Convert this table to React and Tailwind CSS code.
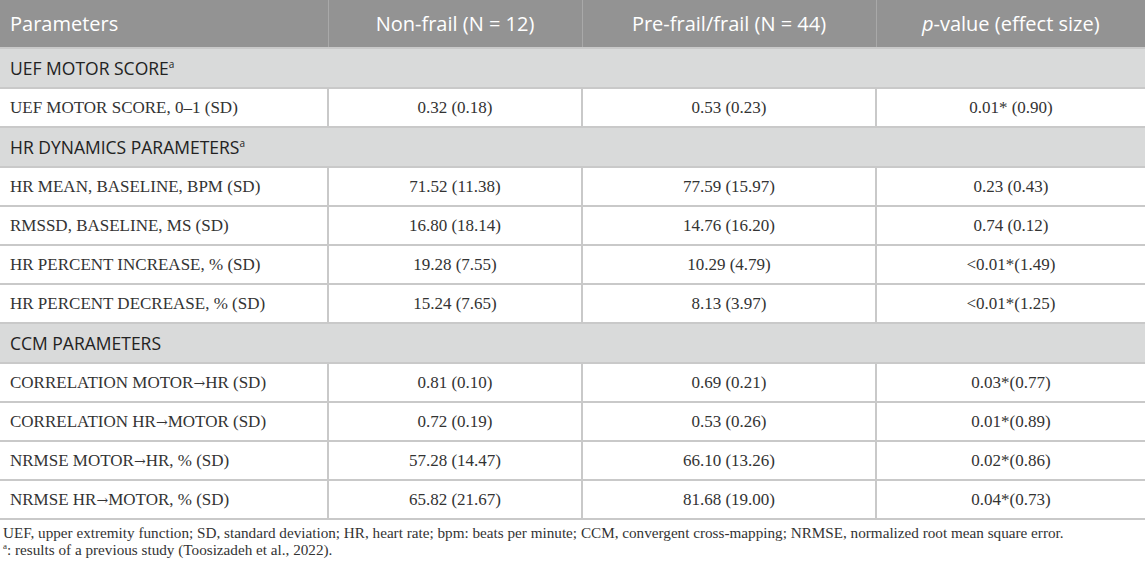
import React from "react";

const sans = { fontFamily: '"Open Sans", "Noto Sans", sans-serif' };
const serif = { fontFamily: '"Liberation Serif", "Times New Roman", serif' };
const arrowFont = { fontFamily: '"DejaVu Serif", serif' };

const sections = [
  {
    title: "UEF MOTOR SCORE",
    sup: true,
    rows: [["UEF MOTOR SCORE, 0–1 (SD)", "0.32 (0.18)", "0.53 (0.23)", "0.01* (0.90)"]],
  },
  {
    title: "HR DYNAMICS PARAMETERS",
    sup: true,
    rows: [
      ["HR MEAN, BASELINE, BPM (SD)", "71.52 (11.38)", "77.59 (15.97)", "0.23 (0.43)"],
      ["RMSSD, BASELINE, MS (SD)", "16.80 (18.14)", "14.76 (16.20)", "0.74 (0.12)"],
      ["HR PERCENT INCREASE, % (SD)", "19.28 (7.55)", "10.29 (4.79)", "<0.01*(1.49)"],
      ["HR PERCENT DECREASE, % (SD)", "15.24 (7.65)", "8.13 (3.97)", "<0.01*(1.25)"],
    ],
  },
  {
    title: "CCM PARAMETERS",
    sup: false,
    rows: [
      ["CORRELATION MOTOR→HR (SD)", "0.81 (0.10)", "0.69 (0.21)", "0.03*(0.77)"],
      ["CORRELATION HR→MOTOR (SD)", "0.72 (0.19)", "0.53 (0.26)", "0.01*(0.89)"],
      ["NRMSE MOTOR→HR, % (SD)", "57.28 (14.47)", "66.10 (13.26)", "0.02*(0.86)"],
      ["NRMSE HR→MOTOR, % (SD)", "65.82 (21.67)", "81.68 (19.00)", "0.04*(0.73)"],
    ],
  },
];

function Label({ text }) {
  const parts = text.split("→");
  return (
    <>
      {parts.map((p, i) => (
        <React.Fragment key={i}>
          {i > 0 && (
            <span className="text-[14px]" style={arrowFont}>
              →
            </span>
          )}
          {p}
        </React.Fragment>
      ))}
    </>
  );
}

export default function App() {
  return (
    <div className="w-[1145px] h-[564px] bg-white overflow-hidden">
      <table className="w-full table-fixed border-collapse">
        <colgroup>
          <col className="w-[328px]" />
          <col className="w-[254px]" />
          <col className="w-[294px]" />
          <col className="w-[269px]" />
        </colgroup>
        <thead>
          <tr className="h-[48px] bg-[#939393] text-white text-[20px]" style={sans}>
            <th className="font-normal text-left pl-[10px] border-b-2 border-[#c9c9c9]">Parameters</th>
            <th className="font-normal text-center border-l border-b-2 border-l-[#a9a9a9] border-b-[#c9c9c9]">Non-frail (N = 12)</th>
            <th className="font-normal text-center border-l border-b-2 border-l-[#a9a9a9] border-b-[#c9c9c9]">Pre-frail/frail (N = 44)</th>
            <th className="font-normal text-center border-l border-b-2 border-l-[#a9a9a9] border-b-[#c9c9c9]">
              <i>p</i>-value (effect size)
            </th>
          </tr>
        </thead>
        <tbody>
          {sections.map((s) => (
            <React.Fragment key={s.title}>
              <tr className="h-[40px] bg-[#d9dada]">
                <td colSpan={4} className="pl-[10px] text-[17.5px] text-[#222] border-b-2 border-[#c9c9c9]" style={sans}>
                  {s.title}
                  {s.sup && <sup className="text-[10px] -top-[7px]">a</sup>}
                </td>
              </tr>
              {s.rows.map((r) => (
                <tr key={r[0]} className="h-[39px] text-[17px] text-[#333]" style={serif}>
                  <td className="pl-[10px] border-b-2 border-[#c9c9c9]">
                    <Label text={r[0]} />
                  </td>
                  <td className="text-center border-l-2 border-b-2 border-[#c9c9c9]">{r[1]}</td>
                  <td className="text-center border-l-2 border-b-2 border-[#c9c9c9]">{r[2]}</td>
                  <td className="text-center border-l-2 border-b-2 border-[#c9c9c9]">{r[3]}</td>
                </tr>
              ))}
            </React.Fragment>
          ))}
        </tbody>
      </table>
      <div className="pl-[3px] pt-[4px] text-[15.2px] leading-[17px] text-[#333]" style={serif}>
        <p>
          UEF, upper extremity function; SD, standard deviation; HR, heart rate; bpm: beats per minute; CCM, convergent
          cross-mapping; NRMSE, normalized root mean square error.
        </p>
        <p>
          <sup className="text-[9px] -top-[6px]">a</sup>: results of a previous study (Toosizadeh et al., 2022).
        </p>
      </div>
    </div>
  );
}
